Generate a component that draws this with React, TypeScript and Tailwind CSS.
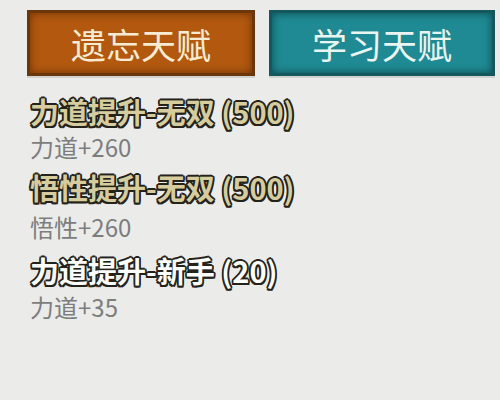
import React from "react";

const outline =
  "[text-shadow:-1.5px_-1.5px_0_#23231c,1.5px_-1.5px_0_#23231c,-1.5px_1.5px_0_#23231c,1.5px_1.5px_0_#23231c,0_1.8px_0_#23231c,0_-1.8px_0_#23231c,1.8px_0_0_#23231c,-1.8px_0_0_#23231c]";

export default function App() {
  return (
    <div className="w-[500px] h-[400px] bg-[#ebebe9] overflow-hidden [font-family:'Noto_Sans_CJK_SC','Noto_Sans',sans-serif]">
      <div className="flex gap-[14px] pt-[10px] pl-[27px]">
        <div className="w-[228px] h-[66px] flex items-center justify-center bg-[#b2580f] border-[3px] border-[#6b3609] shadow-[inset_0_0_8px_rgba(60,25,0,0.6),0_2px_0_#d2d2d0]">
          <span className="text-[35px] leading-[35px] text-[#f7ecd3]">遗忘天赋</span>
        </div>
        <div className="w-[226px] h-[66px] flex items-center justify-center bg-[#1f8a93] border-[3px] border-[#14585e] shadow-[inset_0_0_8px_rgba(0,30,35,0.6),0_2px_0_#d2d2d0]">
          <span className="text-[35px] leading-[35px] text-[#eaf5f1]">学习天赋</span>
        </div>
      </div>
      <div className="flex flex-col pl-[30px] pt-[21px]">
        <div className={`text-[29px] leading-[29px] font-bold text-[#d6cc9e] ${outline}`}>力道提升-无双 (500)</div>
        <div className="mt-[9px] text-[24px] leading-[24px] text-[#7d7d7d]">力道+260</div>
        <div className={`mt-[14px] text-[29px] leading-[29px] font-bold text-[#d6cc9e] ${outline}`}>悟性提升-无双 (500)</div>
        <div className="mt-[13px] text-[24px] leading-[24px] text-[#7d7d7d]">悟性+260</div>
        <div className={`mt-[17px] text-[29px] leading-[29px] font-bold text-[#ffffff] ${outline}`}>力道提升-新手 (20)</div>
        <div className="mt-[10px] text-[24px] leading-[24px] text-[#7d7d7d]">力道+35</div>
      </div>
    </div>
  );
}
